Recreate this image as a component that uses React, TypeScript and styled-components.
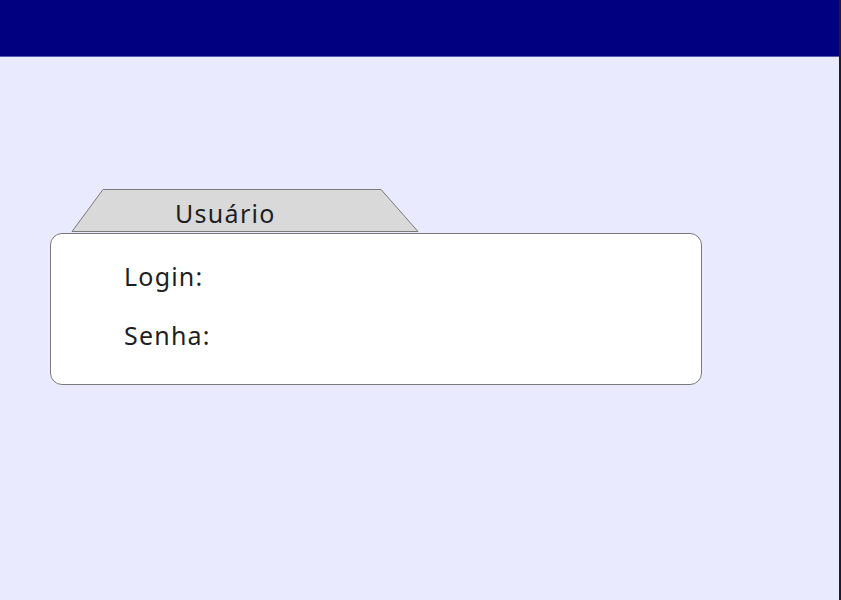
import React from 'react'
import styled, { createGlobalStyle } from 'styled-components'

const GlobalStyle = createGlobalStyle`
  html, body {
    margin: 0;
    padding: 0;
    background: #eaeaff;
  }
  body {
    font-family: 'Noto Sans', 'Open Sans', sans-serif;
    color: #1f1f1f;
  }
`

const Page = styled.div`
  width: 841px;
  min-height: 600px;
  box-sizing: border-box;
  background: #eaeaff;
  border-right: 2px solid #1c1c2a;
  display: flex;
  flex-direction: column;
`

const TopBar = styled.header`
  height: 57px;
  background: #000080;
  border-bottom: 1px solid #5a5ab0;
  box-sizing: border-box;
`

const Main = styled.main`
  padding: 132px 0 0 50px;
`

const Folder = styled.section`
  width: 652px;
  display: flex;
  flex-direction: column;
`

const Tab = styled.div`
  position: relative;
  margin-left: 21px;
  width: 348px;
  height: 43px;
  display: flex;
  align-items: center;
  padding-left: 104px;
  box-sizing: border-box;
`

const TabShape = styled.svg`
  position: absolute;
  inset: 0;
  width: 100%;
  height: 100%;
  overflow: visible;
`

const TabLabel = styled.span`
  position: relative;
  font-size: 25px;
  letter-spacing: 1.3px;
  padding-top: 4px;
`

const Card = styled.div`
  margin-top: 1px;
  height: 152px;
  box-sizing: border-box;
  background: #ffffff;
  border: 1px solid #7a7a7a;
  border-radius: 12px;
  padding: 20px 0 0 73px;
  display: flex;
  flex-direction: column;
  gap: 15px;
`

const FieldRow = styled.div`
  height: 44px;
  display: flex;
  align-items: center;
  font-size: 25px;
  letter-spacing: 1.2px;
`

export default function App() {
  return (
    <Page>
      <GlobalStyle />
      <TopBar />
      <Main>
        <Folder>
          <Tab>
            <TabShape viewBox="0 0 348 43" preserveAspectRatio="none">
              <polygon
                points="1,42.5 32,0.5 310,0.5 347,42.5"
                fill="#d9d9d9"
                stroke="#7a7a7a"
                strokeWidth="1"
              />
            </TabShape>
            <TabLabel>Usuário</TabLabel>
          </Tab>
          <Card>
            <FieldRow>Login:</FieldRow>
            <FieldRow>Senha:</FieldRow>
          </Card>
        </Folder>
      </Main>
    </Page>
  )
}
